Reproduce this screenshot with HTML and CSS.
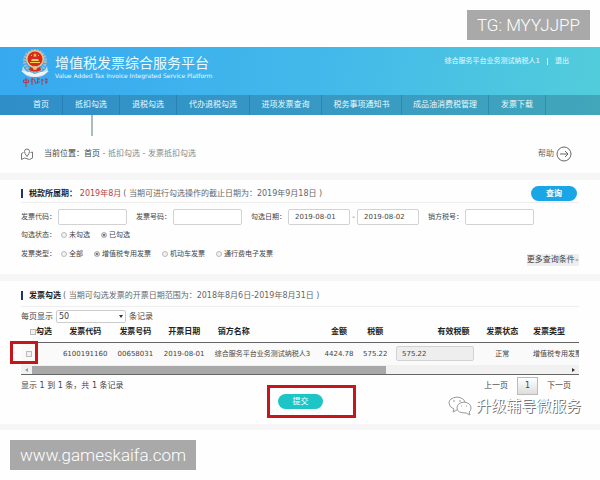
FILE: index.html
```html
<!DOCTYPE html>
<html lang="zh-CN">
<head>
<meta charset="utf-8">
<meta name="viewport" content="width=device-width, initial-scale=1">
<title>增值税发票综合服务平台</title>
<link rel="stylesheet" href="styles.css">
</head>
<body>
<div class="stamp stamp-top">TG: MYYJJPP</div>

<header class="site-header">
  <div class="brand-bar">
    <svg class="emblem" viewBox="0 0 28 38" aria-hidden="true">
      <path d="M2 17q2 6 9 8h6q7-2 9-8l1 5q-3 5-9 6H10q-6-1-9-6z" fill="#c9dbe8"/>
      <path d="M0 22l9 1 5 2 5-2 9-1-6 4-8 2-8-2z" fill="#eef4f7"/>
      <circle cx="14" cy="12" r="10.500" fill="none" stroke="#a9b9bd" stroke-width="3" stroke-dasharray="2 1"/>
      <circle cx="14" cy="10" r="9" fill="#edc98a"/>
      <circle cx="14" cy="10" r="7.500" fill="#d9291f"/>
      <path d="M14 4l.6 1.400 1.500.1-1.100 1 .4 1.500-1.400-.8-1.400.8.4-1.500-1.100-1 1.500-.1zM10 6h1v1h-1zM17 6h1v1h-1zM10 12h8l-1-2h-6zM9 13h10v1H9z" fill="#f6cf5a"/>
      <path d="M9 18q5 3 10 0l1 3q-6 3-12 0z" fill="#d9291f"/>
      <circle cx="14" cy="19" r="2" fill="#edc46a"/>
      <path d="M2.500 31h5v2.500h-5zM5 28.500V38M10 30l2 1M12 29l-2 4M11 32v4M13 30l2 5M16 30h3M17 29l-1 6M16 33h3M20 31h3M21 30v6M24 30l3 1M25 29v6M24 33h3" fill="none" stroke="#b33b50"/>
    </svg>
    <div class="brand">
      <h1>增值税发票综合服务平台</h1>
      <p>Value Added Tax Invoice Integrated Service Platform</p>
    </div>
    <div class="account"><span>综合服务平台业务测试纳税人1</span><i></i><a href="#">退出</a></div>
  </div>
  <nav class="main-nav">
    <a href="#">首页</a>
    <a href="#" class="active">抵扣勾选</a>
    <a href="#">退税勾选</a>
    <a href="#">代办退税勾选</a>
    <a href="#">进项发票查询</a>
    <a href="#">税务事项通知书</a>
    <a href="#">成品油消费税管理</a>
    <a href="#">发票下载</a>
  </nav>
</header>

<div class="crumbs">
  <svg class="pin" viewBox="0 0 12 12" aria-hidden="true"><path d="M2.500 4.500L.5 5.500v6l3-1.500 5 1.500 3-1.500V4l-2 .5M6 8.500Q3.500 5.500 3.500 3.500a2.500 2.500 0 0 1 5 0Q8.500 5.500 6 8.500z"/></svg>
  <p><b>当前位置：首页</b> - 抵扣勾选 - 发票抵扣勾选</p>
  <a href="#" class="help">帮助
    <svg viewBox="0 0 16 16" aria-hidden="true"><circle cx="8" cy="8" r="7"/><path d="M4 8h8M9 5l3 3-3 3"/></svg>
  </a>
</div>

<main>
  <form class="panel filters">
    <div class="panel-title">
      <h2>税款所属期： <em>2019年8月</em></h2>
      <p>( 当期可进行勾选操作的截止日期为：2019年9月18日 )</p>
      <button type="button" class="pill query">查询</button>
    </div>
    <div class="fields">
      <label for="code">发票代码：</label><input type="text" id="code">
      <label for="number">发票号码：</label><input type="text" id="number">
      <label for="from">勾选日期：</label><input type="text" id="from" class="date" value="2019-08-01">
      <label for="to" class="dash">-</label><input type="text" id="to" class="date last" value="2019-08-02">
      <label for="seller">销方税号：</label><input type="text" id="seller">
    </div>
    <div class="choices">
      <span>勾选状态：</span>
      <label><input type="radio" name="state">未勾选</label>
      <label><input type="radio" name="state" checked>已勾选</label>
    </div>
    <div class="choices">
      <span>发票类型：</span>
      <label><input type="radio" name="type">全部</label>
      <label><input type="radio" name="type" checked>增值税专用发票</label>
      <label><input type="radio" name="type">机动车发票</label>
      <label><input type="radio" name="type">通行费电子发票</label>
    </div>
    <button type="button" class="more">更多查询条件<small>»</small></button>
  </form>

  <section class="panel results">
    <div class="panel-title">
      <h2>发票勾选</h2>
      <p>( 当期可勾选发票的开票日期范围为：2018年8月6日-2019年8月31日 )</p>
    </div>
    <div class="page-size">
      <label for="size">每页显示</label>
      <div class="select"><select id="size"><option>50</option></select></div>
      <span>条记录</span>
    </div>
    <table>
      <colgroup>
        <col class="c-pick"><col class="c-code"><col class="c-num"><col class="c-date"><col class="c-seller">
        <col class="c-sum"><col class="c-tax"><col class="c-valid"><col class="c-state"><col class="c-type">
      </colgroup>
      <thead>
        <tr>
          <th class="pick"><label><input type="checkbox">勾选</label></th>
          <th>发票代码</th><th>发票号码</th><th>开票日期</th><th class="seller">销方名称</th>
          <th>金额</th><th>税额</th><th class="valid">有效税额</th><th>发票状态</th><th class="type">发票类型</th>
        </tr>
      </thead>
      <tbody>
        <tr>
          <td class="pick marked"><input type="checkbox" aria-label="勾选"></td>
          <td>6100191160</td><td>00658031</td><td>2019-08-01</td><td class="seller">综合服务平台业务测试纳税人3</td>
          <td>4424.78</td><td>575.22</td>
          <td><input type="text" class="amount" value="575.22" aria-label="有效税额"></td>
          <td>正常</td><td class="type">增值税专用发票</td>
        </tr>
      </tbody>
    </table>
    <div class="scrollbar" aria-hidden="true"><i class="left"></i><div class="track"><div class="thumb"></div></div><i class="right"></i></div>
    <div class="pager">
      <p>显示 1 到 1 条，共 1 条记录</p>
      <a href="#">上一页</a>
      <a href="#" class="current">1</a>
      <a href="#">下一页</a>
    </div>
    <div class="submit-frame"><button type="button" class="pill submit">提交</button></div>
    <div class="channel">
      <svg viewBox="0 0 26 20" aria-hidden="true">
        <path d="M10 14l-4 2 1-3Q2 11 2 7q0-5 8-6 7 1 8 5"/>
        <path d="M17 6q7 1 7 6 0 3-2 4l1 3-4-2q-9 0-9-5 0-5 7-6z"/>
        <path d="M6 5h2M12 5h2M14 10h1M19 10h1"/>
      </svg>
      <span>升级辅导微服务</span>
    </div>
  </section>
</main>

<div class="stamp stamp-bottom">www.gameskaifa.com</div>
</body>
</html>
```

FILE: styles.css
```css
* { box-sizing: border-box; }

body {
  margin: 0;
  background: #fefefe;
  color: #444;
  font: 8px/12px "DejaVu Sans", "Noto Sans CJK SC", sans-serif;
}

h1, h2, p { margin: 0; font-weight: normal; }
a { color: inherit; text-decoration: none; }
button, input, select { margin: 0; color: inherit; font: inherit; }

.stamp {
  width: fit-content;
  padding: 0 10px;
  background: #a9a9a9;
  color: #fff;
  font: 300 17px/30px Roboto, sans-serif;
}
.stamp-top { margin: 10px 10px 7px auto; }
.stamp-bottom { margin: 10px; }

.site-header {
  background: linear-gradient(100deg, #36a9f0, #43b9ea 55%, #52cdda);
  color: #e9fbff;
}
.brand-bar {
  display: flex;
  align-items: flex-start;
  height: 48px;
  padding: 2px 31px 0 21px;
}
.emblem { width: 28px; height: 38px; }
.brand { margin: 5px 0 0 6px; }
.brand h1 { font-size: 14px; line-height: 18px; }
.brand p { font-size: 6px; line-height: 8px; }
.account { display: flex; align-items: center; gap: 7px; margin: 6px 0 0 auto; font-size: 7px; }
.account i { width: 1px; height: 7px; background: #d8f6fa; }

.main-nav {
  display: grid;
  grid-template-columns: 63fr 57fr 57fr 73fr 72fr 80fr 87fr 57fr 54fr;
  background: rgb(30 80 110 / 30%);
  line-height: 20px;
  text-align: center;
}
.main-nav a { position: relative; border-right: 1px solid rgb(20 100 150 / 35%); white-space: nowrap; }
.main-nav a:first-child { padding-left: 20px; }
.main-nav .active::after {
  content: "";
  position: absolute;
  top: 100%;
  left: 50%;
  width: 2px;
  height: 21px;
  background: #a9bdbb;
}

.crumbs {
  display: flex;
  align-items: center;
  height: 58px;
  padding: 20px 28px 0 21px;
  color: #888;
}
.crumbs b { color: #444; font-weight: normal; }
.pin { width: 12px; height: 12px; margin-right: 11px; fill: none; stroke: #777; }
.help { display: flex; align-items: center; gap: 2px; margin-left: auto; color: #666; }
.help svg { width: 16px; height: 16px; fill: none; stroke: #666; }

.panel { position: relative; padding: 5px 21px 0; border-top: 7px solid #f6f6f6; }
.panel-title {
  display: flex;
  align-items: center;
  height: 18px;
  border-bottom: 1px solid #eee;
  color: #666;
}
.panel-title h2 {
  padding-left: 6px;
  border-left: 2px solid #29306e;
  color: #222;
  font-size: 8px;
  line-height: 9px;
  font-weight: bold;
}
.panel-title em { color: #b94242; font-style: normal; font-weight: normal; }
.panel-title p { margin-left: 2px; }

.pill { padding: 0; border: 0; border-radius: 8px; color: #fff; line-height: 15px; }
.query { width: 46px; margin-left: auto; margin-right: 2px; background: #1aa6e6; font-weight: bold; }

input[type="text"] { border: 1px solid #d2d2d2; border-radius: 2px; background: #fff; }
input[type="radio"], input[type="checkbox"] {
  appearance: none;
  width: 6px;
  height: 6px;
  border: 1px solid #bbb;
  background: #f1f1f1;
}
input[type="radio"] { border-radius: 50%; }
input[type="radio"]:checked { background: #555; box-shadow: inset 0 0 0 1px #eee; }

.filters { height: 101px; }
.fields { display: flex; align-items: center; margin-top: 6px; font-size: 7px; }
.fields label { width: 37px; white-space: nowrap; }
.fields input { width: 69px; height: 16px; margin-right: 9px; padding: 0 6px; }
.fields .date { width: 62px; margin-right: 0; }
.fields .last { margin-right: 9px; }
.fields .dash { width: 7px; text-align: center; }

.choices { display: flex; gap: 11px; margin-top: 4px; font-size: 7px; }
.choices + .choices { margin-top: 7px; }
.choices span { width: 29px; white-space: nowrap; }
.choices label { display: flex; align-items: center; gap: 2px; }
.more {
  position: absolute;
  right: 21px;
  bottom: 8px;
  padding: 0;
  border: 0;
  background: #eee;
  line-height: 11px;
}
.more small { font-size: 7px; color: #999; }

.results { height: 156px; padding-top: 4px; border-bottom: 6px solid #f6f6f6; }
.results .panel-title { height: 22px; }
.page-size { display: flex; align-items: center; gap: 3px; margin-top: 3px; }
.select { position: relative; }
.select::after {
  content: "";
  position: absolute;
  top: 5px;
  right: 3px;
  border: 2px solid transparent;
  border-top: 3px solid #333;
  border-bottom: 0;
}
.page-size select {
  display: block;
  appearance: none;
  width: 70px;
  height: 13px;
  padding: 0 2px;
  border: 1px solid #ccc;
  border-radius: 2px;
  background: #fff;
}

table { width: 100%; border-collapse: collapse; table-layout: fixed; font-size: 7px; text-align: center; }
.c-pick { width: 6.5%; } .c-code { width: 10%; } .c-num { width: 8%; } .c-date { width: 9.5%; }
.c-seller { width: 19.5%; } .c-sum { width: 7%; } .c-tax { width: 6%; } .c-valid { width: 15.5%; }
.c-state { width: 8.5%; } .c-type { width: 9.5%; }
th, td { padding: 0; white-space: nowrap; }
th { height: 19px; border-bottom: 1px solid #666; color: #222; font-size: 8px; }
td { height: 23px; background: #fafafa; }
.pick { position: relative; text-align: left; }
.pick label { display: flex; align-items: center; padding-left: 9px; }
.pick > input { display: block; margin-left: 5px; }
.marked::after {
  content: "";
  position: absolute;
  inset: -2px 19px 1px -11px;
  border: 3px solid #c5161b;
}
.seller { padding-left: 4px; text-align: left; }
th.seller { padding-left: 7px; }
.valid { padding-right: 9px; text-align: right; }
.type { overflow: hidden; padding-left: 7px; text-align: left; }
input.amount { display: block; width: 78px; height: 15px; margin-left: 4px; padding: 0 5px; background: #eee; }

.scrollbar { display: flex; align-items: center; height: 10px; border-bottom: 1px solid #666; background: #f1f1f1; }
.scrollbar i { border: 2px solid transparent; margin: 0 4px; }
.scrollbar .left { border-left: 0; border-right: 3px solid #999; }
.scrollbar .right { border-right: 0; border-left: 3px solid #333; }
.track { flex: 1; }
.thumb { width: 66%; height: 8px; background: #a8a8a8; }

.pager { display: flex; align-items: center; gap: 9px; margin-top: 2px; padding-right: 8px; }
.pager p { margin-right: auto; }
.current { width: 21px; border: 1px solid #bbb; background: linear-gradient(#fff, #ddd); line-height: 16px; text-align: center; }

.submit-frame {
  position: absolute;
  top: 104px;
  left: 44.5%;
  width: 89px;
  padding: 6px 8px;
  border: 3px solid #c5161b;
}
.submit { display: block; width: 45px; background: #1cc6c6; }

.channel {
  position: absolute;
  right: 19px;
  bottom: 8px;
  display: flex;
  align-items: center;
  gap: 3px;
  color: #fff;
  font-size: 15px;
  line-height: 20px;
}
.channel span { text-shadow: 1px 1px 0 #777; }
.channel svg { width: 26px; height: 20px; fill: #fff; stroke: #999; }
```
